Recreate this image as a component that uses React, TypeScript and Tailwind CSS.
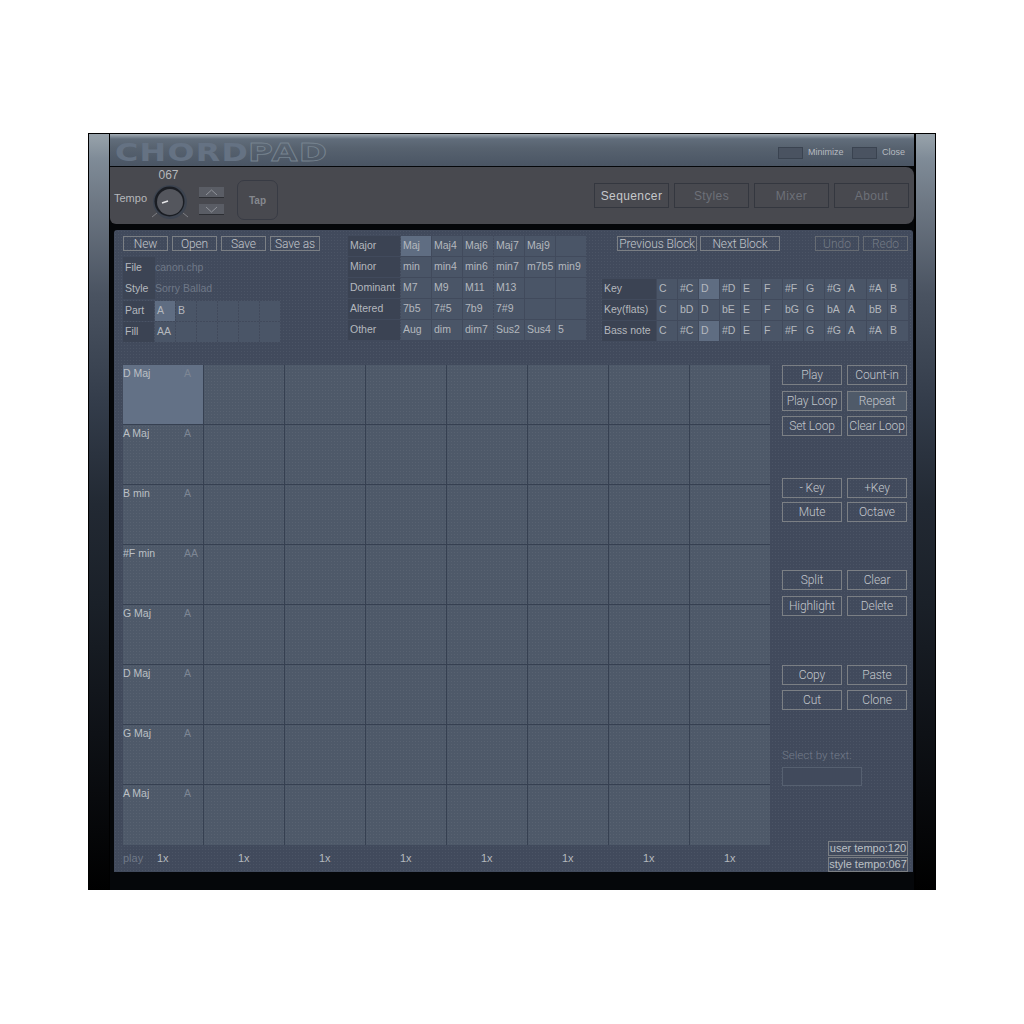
import type { ReactNode } from "react";

const FONT = "font-['Liberation_Sans',Arial,sans-serif]";
const DOTS =
  "bg-[radial-gradient(rgba(255,255,255,0.055)_0.7px,transparent_0.8px)] bg-[size:3px_3px]";
const BTN =
  "flex items-center justify-center border border-[#7b7f84] font-['Roboto',sans-serif] text-[12px] font-light leading-none tracking-[-0.1px] text-[#c2c6cb]";
const BTN_DIM =
  "flex items-center justify-center border border-[#666b72] font-['Roboto',sans-serif] text-[12px] font-light leading-none text-[#747b85]";
const NAV =
  "flex h-[25px] w-[75px] items-center justify-center border border-[#34373f] text-[12px] tracking-[0.4px] text-[#6d7078]";
const CELL = "flex h-[20px] items-center bg-[#4a5567] pb-[1px] pl-[2px] text-[10.5px] text-[#b4b8be]";
const CELL_ON = "flex h-[20px] items-center bg-[#5f6d82] pb-[1px] pl-[2px] text-[10.5px] text-[#b4b8be]";
const LABEL = "flex h-[20px] items-center bg-[#3b4353] pb-[1px] pl-[2px] text-[10.5px] text-[#b4b8be]";

const CHORDS = [
  ["Major", "Maj", "Maj4", "Maj6", "Maj7", "Maj9", ""],
  ["Minor", "min", "min4", "min6", "min7", "m7b5", "min9"],
  ["Dominant", "M7", "M9", "M11", "M13", "", ""],
  ["Altered", "7b5", "7#5", "7b9", "7#9", "", ""],
  ["Other", "Aug", "dim", "dim7", "Sus2", "Sus4", "5"],
];

const KEYS = [
  ["Key", "C", "#C", "D", "#D", "E", "F", "#F", "G", "#G", "A", "#A", "B"],
  ["Key(flats)", "C", "bD", "D", "bE", "E", "F", "bG", "G", "bA", "A", "bB", "B"],
  ["Bass note", "C", "#C", "D", "#D", "E", "F", "#F", "G", "#G", "A", "#A", "B"],
];

const BLOCKS = [
  ["D Maj", "A"],
  ["A Maj", "A"],
  ["B min", "A"],
  ["#F min", "AA"],
  ["G Maj", "A"],
  ["D Maj", "A"],
  ["G Maj", "A"],
  ["A Maj", "A"],
];

function Knob() {
  return (
    <svg width="40" height="40" viewBox="0 0 40 40" className="block">
      <line x1="2" y1="35" x2="7" y2="31" stroke="#8b8d92" strokeWidth="0.8" />
      <line x1="33" y1="31" x2="38" y2="35" stroke="#8b8d92" strokeWidth="0.8" />
      <circle cx="20" cy="20" r="17" fill="#3d4450" />
      <circle cx="19.5" cy="19.5" r="15" fill="#1a1d23" />
      <circle cx="20" cy="20" r="13" fill="#54565d" />
      <line x1="12" y1="21" x2="18" y2="19" stroke="#e6e7e9" strokeWidth="1.6" />
    </svg>
  );
}

function Arrow({ up }: { up?: boolean }) {
  return (
    <div className="flex h-[11px] w-[25px] items-center justify-center border-b border-[#2c2e33] bg-[#5a5d65]">
      <svg width="13" height="7" viewBox="0 0 13 7">
        <polyline
          points={up ? "1,6 6.5,1 12,6" : "1,1 6.5,6 12,1"}
          fill="none"
          stroke="#8f9299"
          strokeWidth="1"
        />
      </svg>
    </div>
  );
}

function Btn({ w, children, dim }: { w: string; children: ReactNode; dim?: boolean }) {
  return <div className={`${dim ? BTN_DIM : BTN} ${w}`}>{children}</div>;
}

function SideBtn({ children, on }: { children: ReactNode; on?: boolean }) {
  return (
    <div className={`${BTN} h-[20px] w-[60px] ${on ? "bg-[#4f5a69]" : ""}`}>{children}</div>
  );
}

function Rail({ right }: { right?: boolean }) {
  return (
    <div
      className={`w-[22px] shrink-0 bg-[linear-gradient(#98a3ab_0px,#7f8b97_25px,#6d7783_70px,#4a5361_160px,#333c4a_270px,#222933_370px,#1a2028_470px,#0e1116_600px,#000000_757px)] ${
        right ? "border-l-2 border-r border-black" : "border-l border-r border-black"
      }`}
    />
  );
}

export default function App() {
  return (
    <div className={`h-[1024px] bg-white pl-[88px] pt-[133px] ${FONT}`}>
      <div className="flex h-[757px] w-[848px] border-t border-black bg-black">
        <Rail />
        <div className="flex w-[804px] flex-col bg-[#05070a]">
          {/* title bar */}
          <div className="flex h-[32px] shrink-0 items-center bg-[linear-gradient(#a1abb3_0px,#616d7b_5px,#57626f_14px,#4a5564_100%)] pl-[5px] pt-[5px]">
            <span className="inline-block origin-left scale-x-[1.27] font-['DejaVu_Sans',sans-serif] text-[25px] font-bold leading-none tracking-[1px] text-[#657283]">
              CHORD
            </span>
            <span className="ml-[27px] inline-block origin-left scale-x-[1.36] font-['DejaVu_Sans',sans-serif] text-[25px] font-bold leading-none tracking-[1px] text-transparent [-webkit-text-stroke:0.8px_#76838f]">
              PAD
            </span>
            <div className="ml-auto flex items-center pr-[7px] text-[9px] text-[#b6bac0]">
              <div className="h-[12px] w-[25px] border border-[#3a4350] bg-[#4a5361]" />
              <span className="ml-[5px] w-[44px]">Minimize</span>
              <div className="h-[12px] w-[25px] border border-[#3a4350] bg-[#4a5361]" />
              <span className="ml-[5px] w-[25px]">Close</span>
            </div>
          </div>

          {/* tempo and page tabs */}
          <div className="mt-[1px] flex h-[57px] shrink-0 rounded-r-[8px] rounded-bl-[6px] bg-[#48494f] pl-[4px]">
            <span className="mt-[25px] text-[11px] leading-[13px] text-[#b5b7bb]">Tempo</span>
            <div className="ml-[3px] flex flex-col items-center">
              <span className="mr-[3px] mt-[2px] text-[12px] leading-[13px] text-[#b5b7bb]">067</span>
              <Knob />
            </div>
            <div className="ml-[9px] mt-[20px] flex flex-col gap-[6px]">
              <Arrow up />
              <Arrow />
            </div>
            <div className="ml-[13px] mt-[13px] flex h-[40px] w-[41px] items-center justify-center rounded-[7px] border border-[#383b44] text-[10px] font-bold text-[#85888e]">
              Tap
            </div>
            <div className="ml-auto mr-[5px] mt-[16px] flex gap-[5px]">
              <div className={`${NAV} text-[#c6c8cb]`}>Sequencer</div>
              <div className={NAV}>Styles</div>
              <div className={NAV}>Mixer</div>
              <div className={NAV}>About</div>
            </div>
          </div>

          {/* main panel */}
          <div
            className={`ml-[4px] mr-[1px] mt-[6px] flex h-[642px] shrink-0 flex-col rounded-t-[3px] bg-[#414a5c] pl-[9px] pt-[6px] ${DOTS}`}
          >
            <div className="flex h-[106px] shrink-0">
              {/* file block */}
              <div className="w-[225px] shrink-0">
                <div className="flex gap-[4px]">
                  <Btn w="h-[15px] w-[45px]">New</Btn>
                  <Btn w="h-[15px] w-[45px]">Open</Btn>
                  <Btn w="h-[15px] w-[45px]">Save</Btn>
                  <Btn w="h-[15px] w-[50px]">Save as</Btn>
                </div>
                <div className="mt-[6px] flex h-[21px] items-center text-[10.5px]">
                  <span className="flex h-full w-[32px] items-center bg-[#3c4454] pl-[2px] text-[#b4b8be]">File</span>
                  <span className="text-[#6f7887]">canon.chp</span>
                </div>
                <div className="flex h-[21px] items-center text-[10.5px]">
                  <span className="flex h-full w-[32px] items-center bg-[#3c4454] pl-[2px] text-[#b4b8be]">Style</span>
                  <span className="text-[#6f7887]">Sorry Ballad</span>
                </div>
                <div className="mt-[2px] grid w-[157px] grid-cols-[31px_repeat(6,20px)] gap-[1px]">
                  <div className={LABEL}>Part</div>
                  <div className={CELL_ON}>A</div>
                  <div className={CELL}>B</div>
                  <div className={CELL} />
                  <div className={CELL} />
                  <div className={CELL} />
                  <div className={CELL} />
                  <div className={LABEL}>Fill</div>
                  <div className={CELL}>AA</div>
                  <div className={CELL} />
                  <div className={CELL} />
                  <div className={CELL} />
                  <div className={CELL} />
                  <div className={CELL} />
                </div>
              </div>

              {/* chord types */}
              <div className="w-[254px] shrink-0">
                <div className="grid w-[238px] grid-cols-[52px_repeat(6,30px)] gap-[1px]">
                  {CHORDS.map((row) =>
                    row.map((text, i) => (
                      <div
                        key={row[0] + i}
                        className={i === 0 ? LABEL : text === "Maj" ? CELL_ON : CELL}
                      >
                        {text}
                      </div>
                    )),
                  )}
                </div>
              </div>

              {/* block nav and key */}
              <div className="w-[306px] shrink-0">
                <div className="flex pl-[15px]">
                  <Btn w="h-[15px] w-[80px]">Previous Block</Btn>
                  <Btn w="ml-[3px] h-[15px] w-[80px]">Next Block</Btn>
                  <Btn dim w="ml-[35px] h-[15px] w-[44px]">Undo</Btn>
                  <Btn dim w="ml-[4px] h-[15px] w-[45px]">Redo</Btn>
                </div>
                <div className="mt-[28px] grid w-[306px] grid-cols-[54px_repeat(12,20px)] gap-[1px]">
                  {KEYS.map((row) =>
                    row.map((text, i) => (
                      <div
                        key={row[0] + i}
                        className={i === 0 ? LABEL : i === 3 && row[0] !== "Key(flats)" ? CELL_ON : CELL}
                      >
                        {text}
                      </div>
                    )),
                  )}
                </div>
              </div>
            </div>

            <div className="mt-[23px] flex">
              <div className="w-[647px] shrink-0">
                <div className={`grid h-[480px] grid-cols-[repeat(7,81px)_80px] grid-rows-8 bg-[#4e5969] ${DOTS}`}>
                  {BLOCKS.map(([name, part], row) =>
                    Array.from({ length: 8 }, (_, col) => (
                      <div
                        key={`${row}-${col}`}
                        className={`flex border-b border-r border-[#364051] pt-[2px] text-[10.5px] leading-[13px] ${
                          row === 0 && col === 0 ? "bg-[#637186]" : ""
                        } ${row === 7 ? "border-b-0" : ""} ${col === 7 ? "border-r-0" : ""}`}
                      >
                        {col === 0 && (
                          <>
                            <span className="w-[61px] text-[#bcc0c5]">{name}</span>
                            <span className="text-[#7d8694]">{part}</span>
                          </>
                        )}
                      </div>
                    )),
                  )}
                </div>
                <div className="relative grid h-[27px] grid-cols-[repeat(7,81px)_80px] items-center text-[11px] text-[#b4b8be]">
                  <span className="absolute left-0 text-[#6f7887]">play</span>
                  {Array.from({ length: 8 }, (_, i) => (
                    <span key={i} className="pl-[34px]">
                      1x
                    </span>
                  ))}
                </div>
              </div>

              {/* side buttons */}
              <div className="ml-[12px] flex w-[125px] flex-col">
                <div className="flex gap-[5px]">
                  <SideBtn>Play</SideBtn>
                  <SideBtn>Count-in</SideBtn>
                </div>
                <div className="mt-[6px] flex gap-[5px]">
                  <SideBtn>Play Loop</SideBtn>
                  <SideBtn on>Repeat</SideBtn>
                </div>
                <div className="mt-[5px] flex gap-[5px]">
                  <SideBtn>Set Loop</SideBtn>
                  <SideBtn>Clear Loop</SideBtn>
                </div>
                <div className="mt-[42px] flex gap-[5px]">
                  <SideBtn>- Key</SideBtn>
                  <SideBtn>+Key</SideBtn>
                </div>
                <div className="mt-[4px] flex gap-[5px]">
                  <SideBtn>Mute</SideBtn>
                  <SideBtn>Octave</SideBtn>
                </div>
                <div className="mt-[48px] flex gap-[5px]">
                  <SideBtn>Split</SideBtn>
                  <SideBtn>Clear</SideBtn>
                </div>
                <div className="mt-[6px] flex gap-[5px]">
                  <SideBtn>Highlight</SideBtn>
                  <SideBtn>Delete</SideBtn>
                </div>
                <div className="mt-[49px] flex gap-[5px]">
                  <SideBtn>Copy</SideBtn>
                  <SideBtn>Paste</SideBtn>
                </div>
                <div className="mt-[5px] flex gap-[5px]">
                  <SideBtn>Cut</SideBtn>
                  <SideBtn>Clone</SideBtn>
                </div>
                <span className="mt-[39px] font-['Roboto',sans-serif] text-[11.5px] font-light leading-[13px] text-[#747d8b]">Select by text:</span>
                <div className="mt-[5px] h-[19px] w-[80px] border border-[#566070] bg-[#414a5c]" />
                <div className="ml-[46px] mt-[55px] flex h-[15px] w-[80px] items-center justify-center border border-[#7b7f84] text-[11px] leading-none text-[#bcc0c5]">
                  user tempo:120
                </div>
                <div className="ml-[46px] mt-[1px] flex h-[15px] w-[80px] items-center justify-center border border-[#7b7f84] text-[11px] leading-none text-[#bcc0c5]">
                  style tempo:067
                </div>
              </div>
            </div>
          </div>
        </div>
        <Rail right />
      </div>
    </div>
  );
}
